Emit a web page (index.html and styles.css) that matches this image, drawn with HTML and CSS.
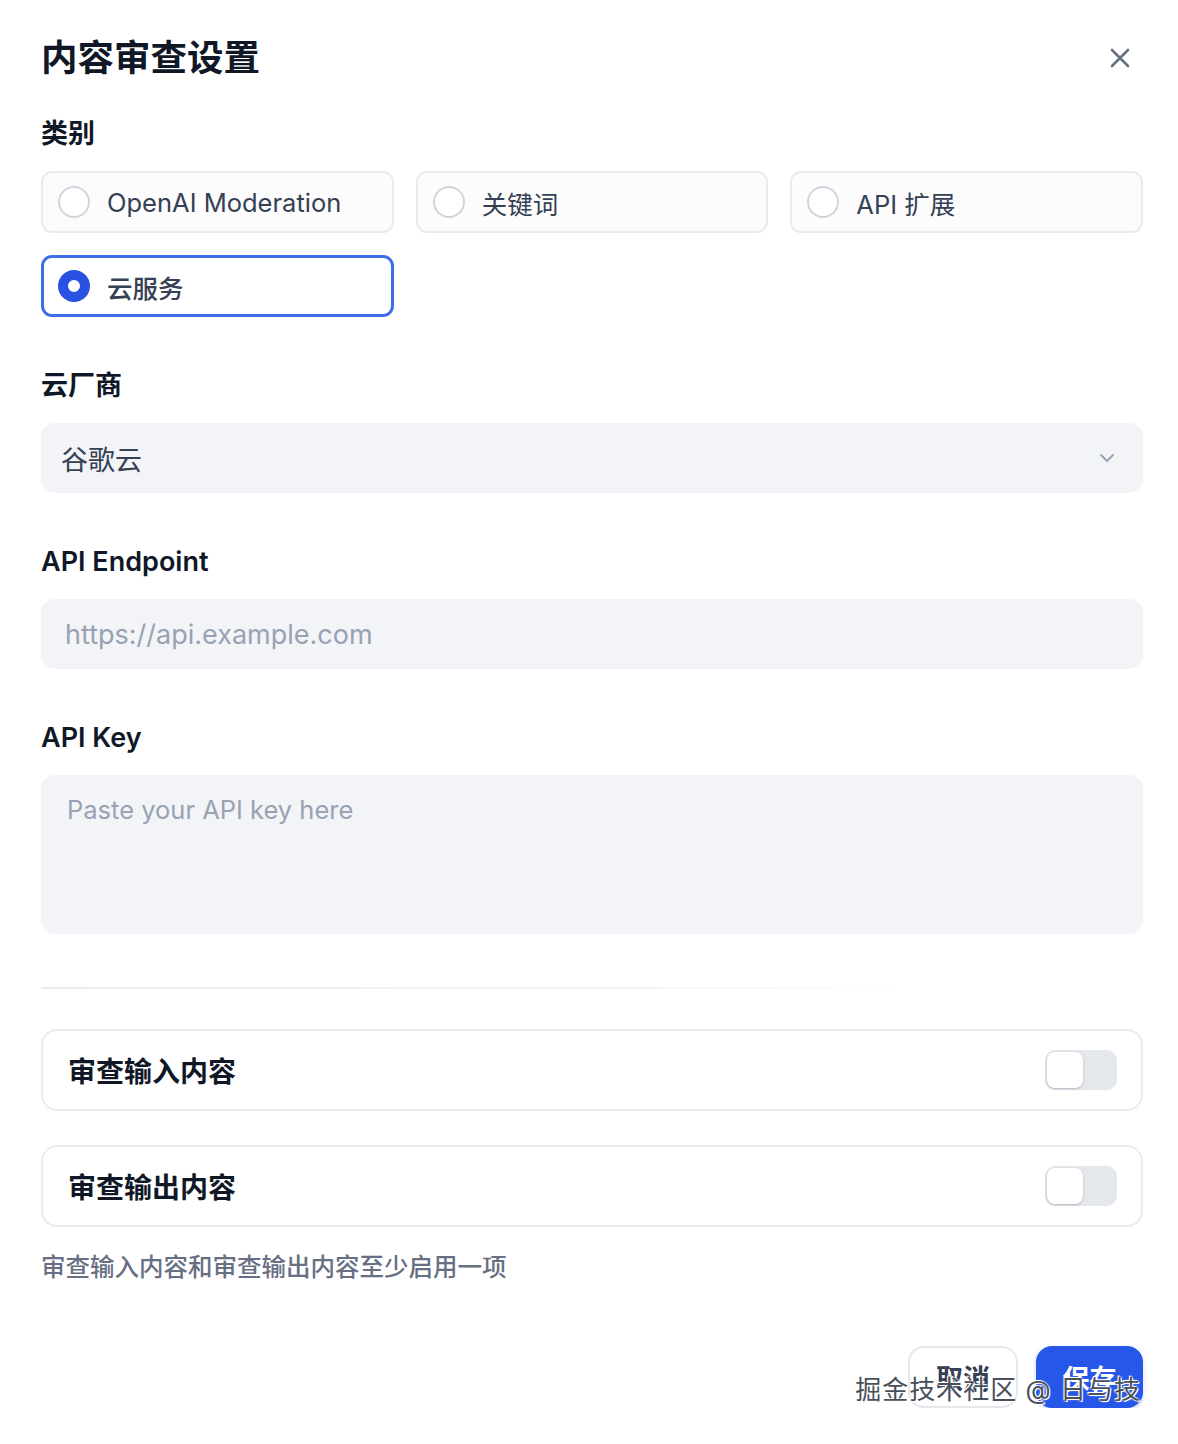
FILE: index.html
```html
<!DOCTYPE html>
<html lang="zh">
<head>
<meta charset="utf-8">
<title>内容审查设置</title>
<link rel="stylesheet" href="styles.css">
</head>
<body>
<div class="dialog">
  <div class="header">
    <h1 class="title">内容审查设置</h1>
    <button class="close" aria-label="关闭">
      <svg width="22" height="22" viewBox="0 0 22 22"><path d="M3 3 L19 19 M19 3 L3 19" stroke="#676f83" stroke-width="2.6" stroke-linecap="round" fill="none"/></svg>
    </button>
  </div>

  <div class="label label-first">类别</div>
  <div class="radio-grid">
    <div class="radio-card"><span class="radio"></span><span class="radio-text">OpenAI Moderation</span></div>
    <div class="radio-card"><span class="radio"></span><span class="radio-text">关键词</span></div>
    <div class="radio-card"><span class="radio"></span><span class="radio-text">API 扩展</span></div>
    <div class="radio-card selected"><span class="radio"></span><span class="radio-text">云服务</span></div>
  </div>

  <div class="label">云厂商</div>
  <div class="select">
    <span class="select-value">谷歌云</span>
    <svg class="chevron" width="16" height="10" viewBox="0 0 16 10"><path d="M2 2 L8 8 L14 2" stroke="#98a2b3" stroke-width="1.8" fill="none" stroke-linecap="round" stroke-linejoin="round"/></svg>
  </div>

  <div class="label">API Endpoint</div>
  <div class="input"><span class="placeholder">https://api.example.com</span></div>

  <div class="label">API Key</div>
  <div class="textarea"><span class="placeholder">Paste your API key here</span></div>

  <div class="divider"></div>

  <div class="toggle-card">
    <span class="toggle-label">审查输入内容</span>
    <span class="switch"><span class="knob"></span></span>
  </div>
  <div class="toggle-card second">
    <span class="toggle-label">审查输出内容</span>
    <span class="switch"><span class="knob"></span></span>
  </div>

  <div class="hint">审查输入内容和审查输出内容至少启用一项</div>

  <div class="footer">
    <button class="btn btn-cancel">取消</button>
    <button class="btn btn-save">保存</button>
    <span class="watermark">掘金技术社区 @ 日与技</span>
  </div>
</div>
</body>
</html>
```

FILE: styles.css
```css
* { box-sizing: border-box; }
html, body { margin: 0; padding: 0; background: #ffffff; }
body {
  font-family: Inter, "Noto Sans CJK SC", "Noto Sans", sans-serif;
  color: #101828;
}
.dialog {
  width: 1178px;
  padding: 34px 35px 0 41px;
}
.header {
  display: flex;
  align-items: center;
  justify-content: space-between;
  height: 48px;
}
.title {
  margin: 0;
  font-size: 36.5px;
  line-height: 48px;
  font-weight: 700;
  color: #101828;
}
.close {
  border: 0;
  background: none;
  padding: 0;
  width: 22px;
  height: 22px;
  margin-right: 12px;
  display: flex;
}
.label {
  font-size: 27px;
  line-height: 36px;
  font-weight: 600;
  color: #101828;
  margin-top: 51px;
  margin-bottom: 19px;
}
.label-first { margin-top: 34px; }
.radio-grid {
  display: grid;
  grid-template-columns: repeat(3, 1fr);
  gap: 22px;
}
.radio-card {
  height: 62px;
  border: 2px solid #e9ebef;
  border-radius: 11px;
  background: #fcfcfd;
  display: flex;
  align-items: center;
  padding-left: 15px;
}
.radio {
  width: 32px;
  height: 32px;
  border-radius: 50%;
  border: 2px solid #d0d5dd;
  background: #ffffff;
  flex: none;
}
.radio-text {
  margin-left: 17px;
  font-size: 25.5px;
  color: #354052;
  font-weight: 400;
}
.radio-card.selected {
  border: 3px solid #3d6ee6;
  background: #ffffff;
  padding-left: 14px;
}
.radio-card.selected .radio {
  border: 10px solid #2952e3;
  background: #ffffff;
}
.radio-card.selected .radio-text { font-weight: 500; }
.select, .input {
  height: 70px;
  border-radius: 14px;
  background: #f2f4f7;
  display: flex;
  align-items: center;
  font-size: 27px;
}
.select {
  justify-content: space-between;
  padding: 0 28px 0 20px;
}
.select-value { color: #354052; }
.input { padding-left: 24px; }
.placeholder { color: #98a2b3; font-size: 27px; }
.textarea {
  height: 159px;
  border-radius: 14px;
  background: #f2f4f7;
  padding: 17px 26px;
  line-height: 36px;
}
.textarea .placeholder { font-size: 25.5px; }
.divider {
  height: 2px;
  margin-top: 53px;
  width: 870px;
  background: linear-gradient(to right, #eaecf0 0%, #f0f2f5 60%, rgba(242,244,247,0) 100%);
}
.toggle-card {
  margin-top: 40px;
  height: 82px;
  border: 2px solid #eaecf0;
  border-radius: 16px;
  display: flex;
  align-items: center;
  justify-content: space-between;
  padding: 0 24px 0 25px;
  background: #ffffff;
}
.toggle-card.second { margin-top: 34px; }
.toggle-label {
  font-size: 28px;
  font-weight: 600;
  color: #101828;
}
.switch {
  width: 72px;
  height: 40px;
  border-radius: 10px;
  background: #e4e7ec;
  padding: 2px;
  display: flex;
}
.knob {
  width: 36px;
  height: 36px;
  border-radius: 8px;
  background: #ffffff;
  box-shadow: 0 1px 3px rgba(16, 24, 40, 0.15), 0 1px 2px rgba(16, 24, 40, 0.08);
}
.hint {
  margin-top: 24px;
  font-size: 24.5px;
  line-height: 32px;
  font-weight: 500;
  color: #676f83;
}
.footer {
  position: relative;
  margin-top: 63px;
  display: flex;
  justify-content: flex-end;
  gap: 18px;
}
.btn {
  height: 62px;
  border-radius: 16px;
  font-family: inherit;
  font-size: 27px;
  font-weight: 600;
  padding: 0 26px;
}
.btn-cancel {
  width: 110px;
  background: #ffffff;
  color: #354052;
  border: 2px solid #e4e7ec;
}
.btn-save {
  width: 107px;
  background: #2657e8;
  color: #ffffff;
  border: 0;
  box-shadow: 0 2px 4px rgba(38, 87, 232, 0.25);
}
.watermark {
  position: absolute;
  right: 2px;
  top: 27px;
  font-size: 26px;
  line-height: 34px;
  letter-spacing: 1px;
  color: #4a4f5a;
  font-weight: 400;
  text-shadow: 0 0 2px #ffffff, 0 0 2px #ffffff, 1px 1px 0 #ffffff, -1px -1px 0 #ffffff;
  white-space: nowrap;
  pointer-events: none;
}
```
